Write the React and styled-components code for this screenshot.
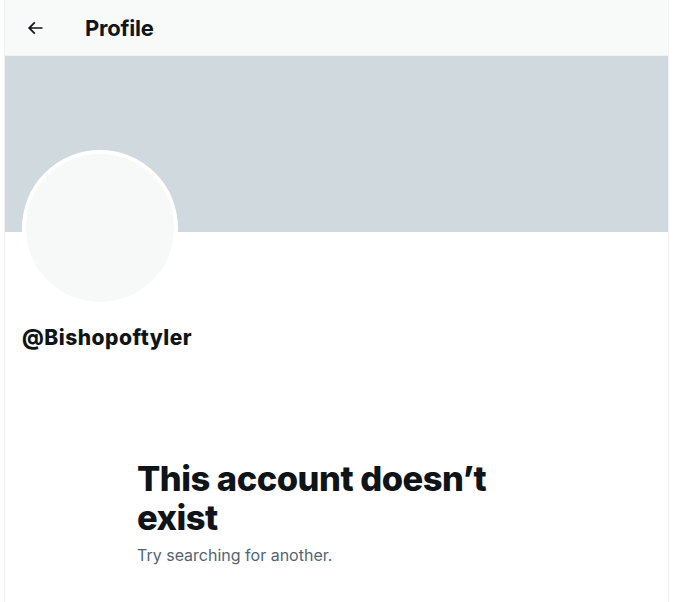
import React from "react";
import styled, { createGlobalStyle } from "styled-components";

const Global = createGlobalStyle`
  body {
    margin: 0;
    background: #ffffff;
    font-family: Inter, "Noto Sans", sans-serif;
    color: #0f1419;
  }
`;

const Column = styled.div`
  width: 665px;
  margin-left: 4px;
  min-height: 602px;
  border-left: 1px solid #eff3f4;
  border-right: 1px solid #eff3f4;
  box-sizing: border-box;
`;

const TopBar = styled.div`
  height: 55px;
  display: flex;
  align-items: center;
  gap: 38px;
  padding-left: 18px;
  background: #f8f9f9;
  border-bottom: 1px solid #eff3f4;
`;

const BackBtn = styled.button`
  width: 24px;
  height: 24px;
  border: 0;
  padding: 0;
  background: none;
  display: flex;
  align-items: center;
  justify-content: center;
  color: #0f1419;
`;

const Title = styled.h2`
  margin: 0;
  font-size: 22px;
  font-weight: 700;
  letter-spacing: -0.2px;
`;

const Banner = styled.div`
  height: 176px;
  background: #cfd9de;
`;

const ProfileArea = styled.div`
  padding: 0 17px;
`;

const Avatar = styled.div`
  width: 148px;
  height: 148px;
  margin-top: -82px;
  border-radius: 50%;
  background: #f7f9f9;
  border: 4px solid #ffffff;
  box-sizing: content-box;
`;

const Handle = styled.div`
  margin-top: 19px;
  font-size: 21px;
  font-weight: 800;
  letter-spacing: 0.5px;
`;

const Empty = styled.div`
  margin: 109px 0 0 132px;
  width: 400px;
`;

const Heading = styled.h1`
  margin: 0;
  font-size: 34.5px;
  line-height: 39px;
  font-weight: 800;
  letter-spacing: -0.5px;
`;

const Sub = styled.p`
  margin: 8px 0 0;
  font-size: 16px;
  color: #536471;
`;

export default function App() {
  return (
    <>
      <Global />
      <Column>
        <TopBar>
          <BackBtn aria-label="Back">
            <svg width="20" height="20" viewBox="0 0 24 24" fill="currentColor">
              <path d="M7.414 13l5.043 5.04-1.414 1.42L3.586 12l7.457-7.46 1.414 1.42L7.414 11H21v2H7.414z" />
            </svg>
          </BackBtn>
          <Title>Profile</Title>
        </TopBar>
        <Banner />
        <ProfileArea>
          <Avatar />
          <Handle>@Bishopoftyler</Handle>
        </ProfileArea>
        <Empty>
          <Heading>This account doesn’t exist</Heading>
          <Sub>Try searching for another.</Sub>
        </Empty>
      </Column>
    </>
  );
}
